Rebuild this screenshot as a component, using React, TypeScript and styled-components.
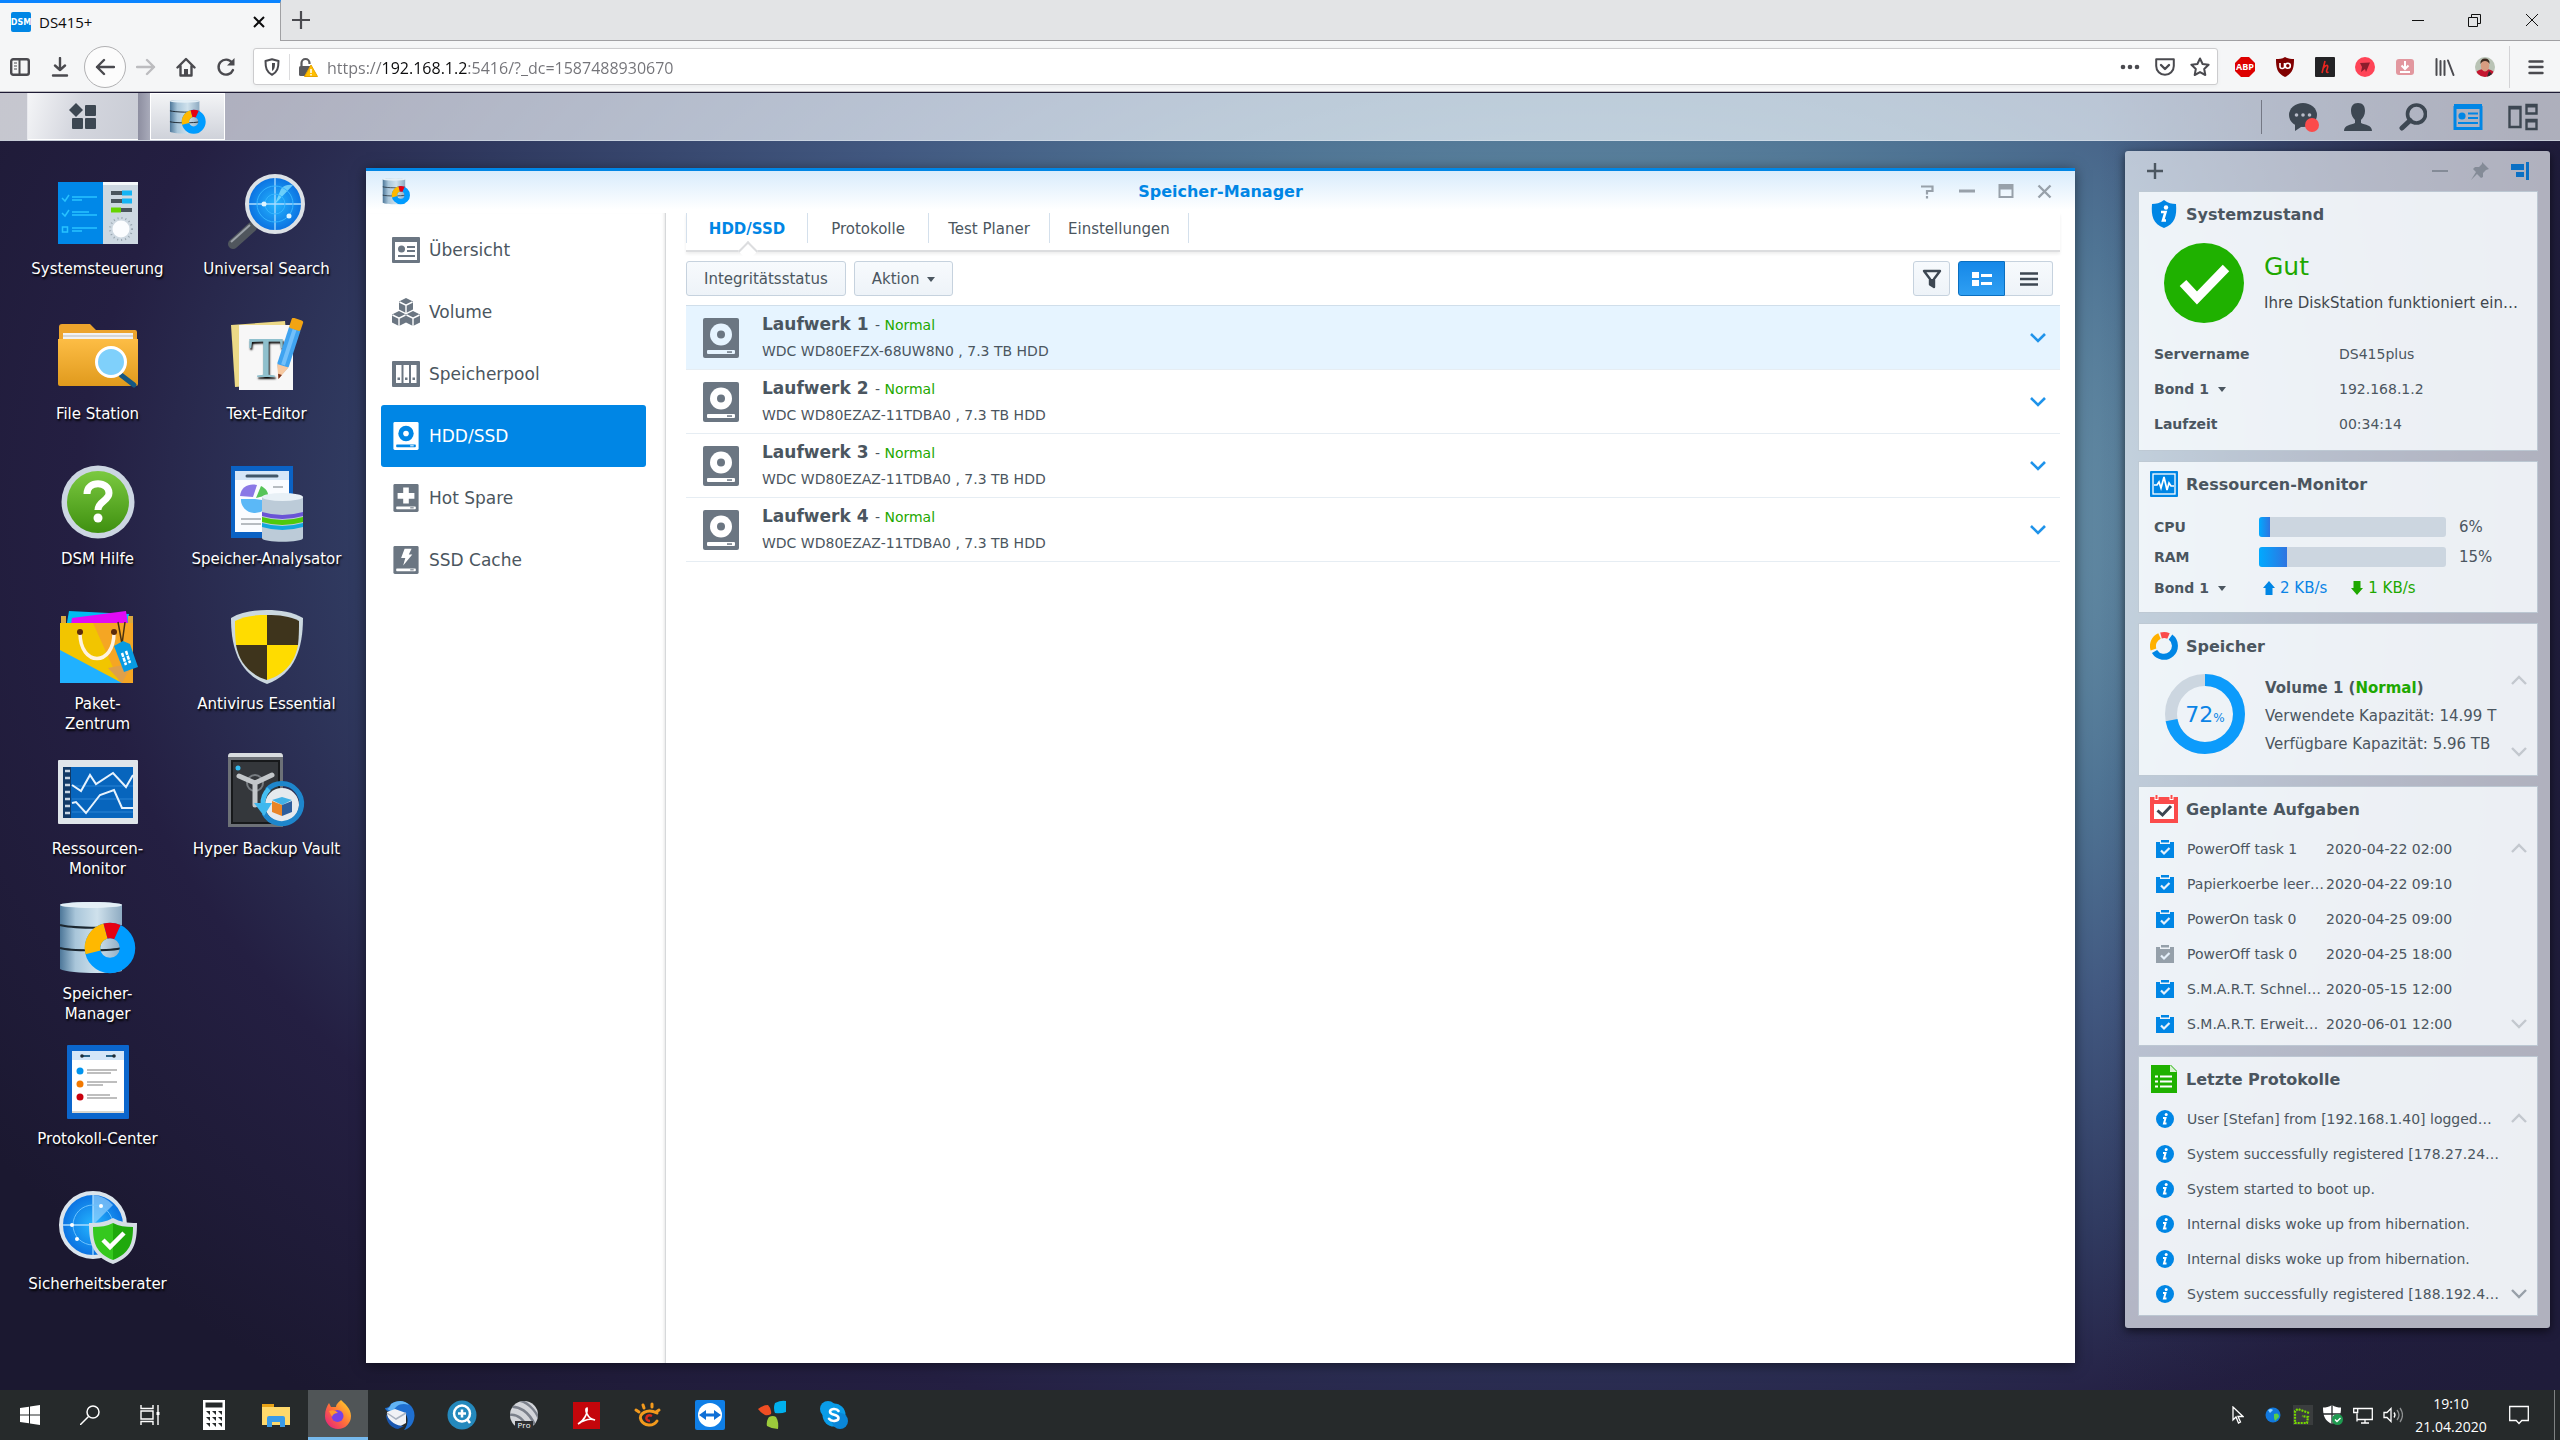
import React from "react";
import styled, { createGlobalStyle } from "styled-components";

const uiFont = `"DejaVu Sans", Verdana, sans-serif`;
const chromeFont = `"Open Sans", "Segoe UI", sans-serif`;

const GlobalStyle = createGlobalStyle`
  * { box-sizing: border-box; }
  body { margin: 0; font-family: ${uiFont}; font-size: 15px; color: #4b5660; }
  button, input, select { font: inherit; color: inherit; margin: 0; }
  button { border: 0; padding: 0; background: none; cursor: pointer; }
  h1, h2, h3, p, ul, dl, dd, dt { margin: 0; padding: 0; font-size: inherit; }
  ul { list-style: none; }
  svg { display: block; flex: none; }
`;

const Screen = styled.div`
  display: flex;
  flex-direction: column;
  min-height: 100vh;
  overflow: hidden;
  background:
    linear-gradient(to left, #1f1c3a 0, rgba(31, 28, 58, 0) 18%),
    radial-gradient(ellipse 59% 66% at 62% 36%, #7099a8 0, #668fa6 28%, #4f7494 44%, #425981 60%, #303a60 82%, #241f42 100%, #1b1830 125%);
`;

/* ---------- browser chrome ---------- */

const TabStrip = styled.div`
  display: flex;
  height: 41px;
  background: #e3e4e6;
  font-family: ${chromeFont};
  border-bottom: 1px solid #a0a0a3;
`;
const BrowserTab = styled.div`
  display: flex;
  align-items: center;
  gap: 8px;
  width: 281px;
  height: 41px;
  padding: 0 15px 0 11px;
  border-top: 3px solid #0a84ff;
  border-right: 1px solid #a0a0a3;
  background: #f5f6f7;
  font-size: 15px;
  color: #0c0c0d;
`;
const TabLabel = styled.span`
  flex: 1;
`;
const NewTab = styled.button`
  display: grid;
  place-items: center;
  width: 40px;
`;
const Caption = styled.div`
  display: flex;
  margin-left: auto;
`;
const CaptionButton = styled.button`
  display: grid;
  place-items: center;
  width: 57px;
  height: 40px;
`;
const Toolbar = styled.div`
  display: flex;
  align-items: center;
  height: 51px;
  padding-top: 1px;
  background: #f5f6f7;
  border-bottom: 1px solid #bcbcc0;
  font-family: ${chromeFont};
`;
const ToolButton = styled.button<{ $ring?: boolean }>`
  display: grid;
  place-items: center;
  width: ${(p) => (p.$ring ? 42 : 40)}px;
  height: 42px;
  margin-left: ${(p) => (p.$ring ? 4 : 0)}px;
  border: ${(p) => (p.$ring ? "1px solid #b1b1b3" : "0")};
  border-radius: 50%;
  background: ${(p) => (p.$ring ? "#fcfcfc" : "none")};
`;
const NavGroup = styled.div`
  display: flex;
  padding-right: 7px;
`;
const AddressBar = styled.div`
  flex: 1;
  display: flex;
  align-items: center;
  height: 37px;
  background: #fff;
  border: 1px solid #ccccce;
  border-radius: 3px;
  box-shadow: 0 1px 4px rgba(0, 0, 0, 0.05);
`;
const BarIcon = styled.button`
  display: grid;
  place-items: center;
  width: 35px;
  height: 30px;
`;
const AddressInput = styled.input`
  flex: 1;
  border: 0;
  outline: 0;
  padding: 2px 0 0 2px;
  height: 32px;
  font-size: 16px;
  color: #0c0c0d;
  background: linear-gradient(to right, #737378 57px, #0c0c0d 57px, #0c0c0d 143px, #737378 143px);
  background-clip: text;
  -webkit-background-clip: text;
  -webkit-text-fill-color: transparent;
`;
const Separator = styled.span<{ $h: number; $c: string }>`
  width: 1px;
  height: ${(p) => p.$h}px;
  background: ${(p) => p.$c};
`;
const Extensions = styled.div`
  display: flex;
  align-items: center;
  padding: 0 4px 0 7px;
  ${Separator} { margin: 0 6px 0 4px; }
`;

/* ---------- DSM task bar ---------- */

const Glass = styled.header`
  display: flex;
  height: 49px;
  border-top: 1px solid #1e1b35;
  background: linear-gradient(rgba(247, 251, 255, 0.66), rgba(247, 251, 255, 0.66));
  border-bottom: 1px solid rgba(220, 230, 240, 0.5);
`;
const Sliver = styled.span`
  width: 28px;
  background: rgba(255, 255, 255, 0.3);
  border-right: 1px solid #e8e9ee;
`;
const MenuButton = styled.button`
  display: grid;
  place-items: center;
  width: 110px;
  background: linear-gradient(105deg, #f4f5f7, #d4d6de 45%, #c9ccd5);
  border-bottom: 1px solid #fff;
`;
const BarGap = styled.span`
  width: 12px;
  background: linear-gradient(to right, #8d8ea0, #a9abba);
`;
const TaskButton = styled.button`
  display: grid;
  place-items: center;
  width: 75px;
  background: linear-gradient(#f3f4f6, #cfd2da);
  border: 1px solid #fff;
`;
const Tray = styled.div`
  display: flex;
  align-items: center;
  margin-left: auto;
  padding-right: 10px;
  ${Separator} { margin-right: 13px; }
`;
const TrayButton = styled.button`
  display: grid;
  place-items: center;
  width: 55px;
  height: 46px;
`;

/* ---------- desktop ---------- */

const Desktop = styled.main`
  flex: 1;
  display: flex;
  align-items: stretch;
  padding: 0 10px 0 0;
`;
const IconGrid = styled.ul`
  display: grid;
  grid-auto-flow: column;
  grid-template-rows: repeat(8, 145px);
  grid-auto-columns: 169px;
  align-content: start;
  width: 366px;
  padding: 32px 0 0 13px;
`;
const Shortcut = styled.button`
  display: flex;
  flex-direction: column;
  align-items: center;
  gap: 6px;
  width: 100%;
  line-height: 20px;
  color: #fff;
  text-shadow: 1px 2px 2px #000;
`;
const ShortcutLabel = styled.span<{ $narrow?: boolean }>`
  max-width: ${(p) => (p.$narrow ? 105 : 169)}px;
`;

/* ---------- application window ---------- */

const AppWindow = styled.section`
  flex: 1;
  display: flex;
  flex-direction: column;
  margin: 27px 50px 27px 0;
  background: #fff;
  border-top: 3px solid #0086e5;
  box-shadow: 0 2px 12px rgba(0, 0, 0, 0.5);
`;
const TitleBar = styled.header`
  display: grid;
  grid-template-columns: 1fr auto 1fr;
  align-items: center;
  height: 42px;
  padding: 0 11px 2px;
  background: linear-gradient(#d8ecfc, #fff 92%);
`;
const TitleIcon = styled.span`
  padding-left: 5px;
`;
const WindowTitle = styled.h1`
  font-size: 16px;
  color: #0086e5;
`;
const WindowButtons = styled.div`
  display: flex;
  justify-content: flex-end;
`;
const WindowButton = styled.button`
  display: grid;
  place-items: center;
  width: 39px;
  height: 30px;
`;
const WindowBody = styled.div`
  flex: 1;
  display: flex;
`;
const Sidebar = styled.nav`
  width: 300px;
  padding: 6px 19px 0 15px;
  border-right: 1px solid #d6d8da;
  box-shadow: inset -3px 0 3px -2px rgba(0, 0, 0, 0.1);
`;
const NavItem = styled.a<{ $active?: boolean }>`
  display: flex;
  align-items: center;
  gap: 9px;
  height: 62px;
  padding-left: 11px;
  border-radius: 3px;
  font-size: 17px;
  text-decoration: none;
  color: ${(p) => (p.$active ? "#fff" : "#4b5660")};
  background: ${(p) => (p.$active ? "#0086e5" : "none")};
`;
const Pane = styled.div`
  flex: 1;
  padding: 0 15px 0 20px;
`;
const Tabs = styled.div`
  display: flex;
  height: 39px;
  padding-bottom: 7px;
  border-bottom: 2px solid #dcdddf;
  box-shadow: 0 2px 3px rgba(0, 0, 0, 0.07);
`;
const Tab = styled.button<{ $active?: boolean }>`
  position: relative;
  min-width: 121px;
  padding: 2px 18px 0;
  border-right: 1px solid #d4e0ec;
  font-weight: ${(p) => (p.$active ? 700 : 400)};
  color: ${(p) => (p.$active ? "#0086e5" : "#4b5660")};
  &:first-child { min-width: 122px; border-left: 1px solid #d4e0ec; }
  ${(p) =>
    p.$active &&
    `&::after {
      content: "";
      position: absolute;
      left: 50%;
      bottom: -15px;
      width: 12px;
      height: 12px;
      margin-left: -6px;
      background: #fff;
      border: 2px solid #dcdddf;
      border-right: 0;
      border-bottom: 0;
      transform: rotate(45deg);
    }`}
`;
const Actions = styled.div`
  display: flex;
  gap: 8px;
  padding: 9px 7px 9px 0;
`;
const Action = styled.button<{ $w?: number; $on?: boolean; $side?: "left" | "right" }>`
  display: flex;
  align-items: center;
  justify-content: center;
  gap: 8px;
  height: 35px;
  width: ${(p) => (p.$w ? `${p.$w}px` : "auto")};
  padding: ${(p) => (p.$w ? "0" : "1px 17px 0")};
  border: 1px solid ${(p) => (p.$on ? "#0a6fc0" : "#c6d2de")};
  border-radius: ${(p) => (p.$side === "left" ? "3px 0 0 3px" : p.$side === "right" ? "0 3px 3px 0" : "3px")};
  ${(p) => p.$side === "right" && "border-left: 0;"}
  background: ${(p) => (p.$on ? "linear-gradient(#1688e8, #2f9ff2)" : "linear-gradient(#f7fafd, #eef3f8)")};
`;
const Spacer = styled.span`
  flex: 1;
`;
const Segmented = styled.div`
  display: flex;
`;
const DriveList = styled.ul`
  border-top: 1px solid #d0deea;
`;
const Drive = styled.li<{ $active?: boolean }>`
  display: flex;
  align-items: center;
  gap: 23px;
  height: 64px;
  padding: 0 10px 0 17px;
  border-bottom: 1px solid #e6edf3;
  background: ${(p) => (p.$active ? "#e6f4ff" : "none")};
`;
const DriveText = styled.div`
  flex: 1;
  font-size: 14px;
  line-height: 26px;
`;
const DriveName = styled.strong`
  font-size: 17px;
`;
const DriveState = styled.span`
  padding-left: 2px;
  font-weight: 400;
`;
const Ok = styled.span`
  color: #1ea800;
`;
const Expand = styled.button`
  display: grid;
  place-items: center;
  width: 24px;
  height: 24px;
`;

/* ---------- widgets ---------- */

const Widgets = styled.aside`
  align-self: flex-start;
  width: 425px;
  margin-top: 10px;
  padding: 0 12px 12px 13px;
  border-radius: 3px;
  background: rgba(247, 251, 255, 0.67);
  box-shadow: 0 3px 10px rgba(0, 0, 0, 0.6);
`;
const WidgetBar = styled.div`
  display: flex;
  align-items: center;
  height: 40px;
  margin: 0 -2px 0 -3px;
`;
const WidgetButton = styled.button`
  display: grid;
  place-items: center;
  width: 40px;
  height: 40px;
`;
const CardStack = styled.div`
  display: flex;
  flex-direction: column;
  gap: 10px;
`;
const Card = styled.section`
  border: 1px solid rgba(150, 166, 182, 0.55);
  background: rgba(249, 252, 255, 0.82);
  font-size: 14px;
`;
const CardTitle = styled.h2`
  display: flex;
  align-items: center;
  gap: 8px;
  height: 44px;
  padding-left: 11px;
  font-size: 16px;
`;
const Health = styled.div`
  display: flex;
  align-items: center;
  gap: 20px;
  padding: 7px 0 13px 25px;
  line-height: 36px;
`;
const HealthState = styled.p`
  padding-top: 4px;
  font-size: 25px;
  color: #1ea800;
`;
const HealthNote = styled.p`
  font-size: 15px;
  color: #41474d;
  white-space: nowrap;
`;
const Facts = styled.dl`
  display: grid;
  grid-template-columns: 185px 1fr;
  padding: 1px 0 8px 15px;
  line-height: 35px;
`;
const Term = styled.dt`
  font-weight: 700;
`;
const PickerWrap = styled.span`
  display: inline-flex;
  align-items: center;
  gap: 9px;
`;
const Picker = styled.select`
  appearance: none;
  border: 0;
  padding: 0;
  background: none;
  font-weight: 700;
`;
const Meters = styled.div`
  display: grid;
  grid-template-columns: 105px 187px 1fr;
  grid-template-rows: 30px 30px 32px;
  align-items: center;
  padding: 6px 0 8px 15px;
  font-size: 15px;
`;
const MeterName = styled.span`
  font-size: 14px;
  font-weight: 700;
`;
const Track = styled.div`
  height: 20px;
  border-radius: 3px;
  background: #ccd6e0;
  overflow: hidden;
`;
const Fill = styled.div`
  height: 100%;
  background: linear-gradient(to right, #00aaff, #2f74e0);
`;
const MeterValue = styled.span`
  padding-left: 13px;
`;
const Traffic = styled.div`
  grid-column: 2 / 4;
  display: flex;
  gap: 24px;
  padding-left: 4px;
`;
const Rate = styled.span<{ $c: string }>`
  display: flex;
  align-items: center;
  gap: 5px;
  color: ${(p) => p.$c};
`;
const Scrollable = styled.div<{ $pad: string }>`
  display: flex;
  padding: ${(p) => p.$pad};
`;
const Scroller = styled.div<{ $inset?: boolean }>`
  display: flex;
  flex-direction: column;
  justify-content: space-between;
  margin-left: auto;
  padding: ${(p) => (p.$inset ? 11 : 0)}px 0;
`;
const ScrollButton = styled.button`
  display: grid;
  place-items: center;
  width: 24px;
  height: 12px;
`;
const Ring = styled.div`
  display: grid;
  width: 80px;
  height: 80px;
  margin-right: 20px;
  > * { grid-area: 1 / 1; }
`;
const RingValue = styled.span`
  place-self: center;
  font-size: 22px;
  color: #0b84e6;
`;
const Percent = styled.small`
  font-size: 12px;
`;
const VolumeText = styled.div`
  font-size: 15px;
  line-height: 28px;
  white-space: nowrap;
`;
const TaskTable = styled.table`
  border-collapse: collapse;
  td { height: 35px; padding: 0; white-space: nowrap; }
  td:nth-child(1) { width: 31px; }
  td:nth-child(2) { width: 139px; }
`;
const LogItem = styled.li`
  display: flex;
  align-items: center;
  gap: 13px;
  height: 35px;
  white-space: nowrap;
`;

/* ---------- Windows task bar ---------- */

const WinBar = styled.footer`
  display: flex;
  height: 50px;
  background: #262a2b;
  color: #fff;
  font-family: ${chromeFont};
`;
const WinButton = styled.button<{ $on?: boolean }>`
  display: grid;
  place-items: center;
  width: 60px;
  height: 50px;
  background: ${(p) => (p.$on ? "#505557" : "none")};
  border-bottom: 3px solid ${(p) => (p.$on ? "#76b9ed" : "transparent")};
  padding-top: 3px;
`;
const Launchers = styled.div`
  display: flex;
  gap: 2px;
  padding-left: 4px;
`;
const WinTray = styled.div`
  display: flex;
  align-items: center;
  margin-left: auto;
`;
const WinTrayButton = styled.button<{ $w?: number }>`
  display: grid;
  place-items: center;
  width: ${(p) => p.$w ?? 30}px;
  height: 48px;
`;
const Clock = styled.time`
  width: 86px;
  font-size: 14px;
  line-height: 23px;
  text-align: center;
`;
const PeekEdge = styled.span`
  width: 6px;
  height: 50px;
  border-left: 1px solid #7f8283;
`;

/* ---------- small drawings ---------- */

const Svg = ({ s = 24, h, vb, children }: { s?: number; h?: number; vb?: string; children: React.ReactNode }) => (
  <svg width={s} height={h ?? s} viewBox={vb ?? `0 0 ${s} ${h ?? s}`} fill="none" aria-hidden="true">
    {children}
  </svg>
);

const line = { stroke: "#4a4a4f", strokeWidth: 2.4, strokeLinecap: "round" as const, strokeLinejoin: "round" as const };

const Caret = () => (
  <Svg s={8} h={5}><path d="M0 0h8L4 5z" fill="#4b5660" /></Svg>
);
const Chevron = ({ up, c = "#c3c8ce", w = 2.4 }: { up?: boolean; c?: string; w?: number }) => (
  <Svg s={16} h={10}><path d={up ? "M1 9l7-7 7 7" : "M1 1l7 7 7-7"} stroke={c} strokeWidth={w} /></Svg>
);

const StorageArt = ({ size }: { size: number }) => (
  <Svg s={size} vb="0 -3 80 80">
    <defs>
      <linearGradient id="cyl"><stop offset="0" stopColor="#4d7799" /><stop offset=".25" stopColor="#a9c6da" /><stop offset=".6" stopColor="#cfe1ec" /><stop offset="1" stopColor="#8eabc2" /></linearGradient>
    </defs>
    <path d="M2 4C2 2 18 1 33 1s31 1 31 3v66c-8 3-54 3-62-2z" fill="url(#cyl)" />
    <ellipse cx="33" cy="4" rx="31" ry="3" fill="#e4eff6" />
    <path d="M2 24c10 3 52 4 62 1M2 47c10 3 52 3 62 0" stroke="#1c2730" strokeWidth="2" />
    <circle cx="52" cy="47" r="17.500" stroke="#009cff" strokeWidth="15.500" />
    <path d="M35 51.400A17.500 17.500 0 0 1 47.500 30.100" stroke="#ffb800" strokeWidth="15.500" />
    <path d="M47.500 30.100A17.500 17.500 0 0 1 59.400 31.100" stroke="#e60012" strokeWidth="15.500" />
  </Svg>
);

const DriveArt = ({ w, h, fg, bg, kind = "disk" }: { w: number; h: number; fg: string; bg: string; kind?: "disk" | "plus" | "bolt" }) => (
  <Svg s={w} h={h} vb="0 0 36 40">
    <rect width="36" height="40" rx="2" fill={fg} />
    {kind === "disk" && (<><circle cx="18" cy="16.500" r="11" fill={bg} /><circle cx="18" cy="16.500" r="4" fill={fg} /></>)}
    {kind === "plus" && <path d="M14 5h8v8h8v8h-8v7h-8v-7H6v-8h8z" fill={bg} />}
    {kind === "bolt" && <path d="M16 4h10l-4 8h5L14 28l3-11h-6z" fill={bg} />}
    <rect x="4" y="32" width="28" height="4" rx="1" fill={bg} />
    <rect x="24" y="33.300" width="5" height="1.500" fill={fg} />
  </Svg>
);

const grey = "#6b7682";
const SideIcon = ({ kind, on }: { kind: string; on?: boolean }) => {
  const fg = on ? "#fff" : grey;
  const bg = on ? "#0086e5" : "#fff";
  if (kind === "overview")
    return (
      <Svg s={28} h={26}>
        <rect width="28" height="26" rx="1" fill={fg} /><rect x="3" y="5" width="22" height="18" fill={bg} />
        <circle cx="9.500" cy="12" r="3.500" fill={fg} />
        <path d="M15 10h8M15 14h8M6 19h17" stroke={fg} strokeWidth="2" />
      </Svg>
    );
  if (kind === "volume")
    return (
      <Svg s={28} h={28}>
        {[[14, 0], [7, 13], [21, 13]].map(([x, y]) => (
          <g key={x} transform={`translate(${x} ${y})`}>
            <path d="M0 0l7 3.500v8L0 15l-7-3.500v-8z" fill={fg} />
            <path d="M-6.500 4L0 7.200 6.500 4M0 7.200V15" stroke={bg} strokeWidth="1.400" />
          </g>
        ))}
      </Svg>
    );
  if (kind === "pool")
    return (
      <Svg s={28} h={26}>
        <rect width="28" height="26" rx="1" fill={fg} />
        {[4, 11.5, 19].map((x) => (<g key={x}><rect x={x} y="4" width="5.500" height="18" fill={bg} /><rect x={x + 1.5} y="16.500" width="2.500" height="2.500" fill={fg} /></g>))}
      </Svg>
    );
  const k = kind === "hdd" ? "disk" : kind === "spare" ? "plus" : "bolt";
  return <Svg s={28}><g transform="translate(1 0)"><DriveArt w={26} h={28} fg={fg} bg={bg} kind={k} /></g></Svg>;
};

const Art: Record<string, React.ReactNode> = {
  control: (
    <>
      <rect y="9" width="46" height="62" fill="#0088e8" /><rect x="45" y="9" width="35" height="62" fill="#cdd8e1" />
      <rect x="45" y="9" width="35" height="3" fill="#f4f8fa" />
      <path d="M4 25l3 3 4-6M4 40l3 3 4-6M4.500 54h5v5h-5zM14 24h25M14 27h10M14 39h17M14 42h25M14 55h25M14 58h10" stroke="#27c2ff" strokeWidth="1.500" />
      <path d="M53 20h21M53 28h21M53 37h21" stroke="#4a555d" strokeWidth="4" />
      <path d="M64 20h10M64 28h10" stroke="#14b4f5" strokeWidth="5" /><path d="M53 37h10" stroke="#66d400" strokeWidth="5" />
      <circle cx="63" cy="56" r="11" stroke="#96a3ad" strokeWidth="2" strokeDasharray="1 3" /><circle cx="63" cy="56" r="8.500" fill="#fbfdff" />
    </>
  ),
  search: (
    <>
      <path d="M6 71L25 54" stroke="#50565d" strokeWidth="10" strokeLinecap="round" /><path d="M4 69L23 52" stroke="#9ba1a8" strokeWidth="2" />
      <circle cx="48" cy="31" r="28" fill="url(#radar)" stroke="#dce1e6" strokeWidth="4" />
      <path d="M48 5v52M22 31h52" stroke="#a9dcff" strokeWidth="1.300" /><path d="M48 31L66 12Q58 11 54 16z" fill="#8fe8ff" opacity=".7" />
      <circle cx="48" cy="31" r="10" stroke="#35b5ff" /><circle cx="48" cy="31" r="18" stroke="#35b5ff" />
      <circle cx="37" cy="31" r="2.500" fill="#dff5ff" /><circle cx="62" cy="43" r="2.500" fill="#dff5ff" />
    </>
  ),
  folder: (
    <>
      <path d="M1 9q0-3 3-3h28l6 6h39q2 0 2 2v20H1z" fill="#eda42c" /><path d="M5 15h70v8H5z" fill="#f2f2f2" /><path d="M5 18h70" stroke="#b9b9b9" />
      <path d="M0 21h80v45q0 2-2 2H2q-2 0-2-2z" fill="url(#gold)" />
      <path d="M63 57l13 10" stroke="#165782" strokeWidth="5" strokeLinecap="round" /><circle cx="53" cy="44" r="14.500" fill="#7fd0fb" stroke="#fff" strokeWidth="3" />
    </>
  ),
  text: (
    <>
      <path d="M4 7l54-4 6 62-56 4z" fill="#ecd987" /><path d="M12 7h54v65H12z" fill="#f7f7f7" />
      <text x="39" y="59" fontFamily="Liberation Serif, serif" fontSize="58" textAnchor="middle" fill="#8fc0cd">T</text>
      <g transform="translate(70 4) rotate(18)"><path d="M-6 7h12v38l-6 14-6-14z" fill="#3fa3f0" /><path d="M-2 8h4v37h-4z" fill="#73c0fa" /><path d="M-6 46h12l-6 14z" fill="#f7c8a0" /><path d="M-2 55h4l-2 5z" fill="#7a2f18" /><rect x="-6" y="-3" width="12" height="11" rx="2" fill="#f2a413" /></g>
    </>
  ),
  help: (
    <>
      <circle cx="40" cy="39" r="36.500" fill="#ccd6e2" /><circle cx="40" cy="39" r="31" fill="url(#green)" />
      <path d="M29 31c0-14 22-13 22-1 0 8-11 8-11 17" stroke="#fff" strokeWidth="7" /><circle cx="40" cy="55" r="4.500" fill="#fff" />
    </>
  ),
  analyzer: (
    <>
      <path d="M4 3h62v72H4z" fill="#0b62c4" /><path d="M8 8h54v61H8z" fill="#fafcff" /><path d="M8 8h54v9H8z" fill="#d5e6f8" /><path d="M20 13h30" stroke="#40566a" strokeWidth="3" strokeLinecap="round" />
      <path d="M28 36L14 36A14 13 0 0 0 42 38z" fill="#5bb8f7" /><path d="M26 34L13 33c1-10 10-13 17-11z" fill="#8a78e6" /><path d="M29 35l5-12c4 2 7 5 7 9z" fill="#57c458" />
      <path d="M46 24h10M14 56h20M14 61h20" stroke="#b7bcc1" strokeWidth="2" />
      <path d="M35 34v41c0 5 41 5 41 0V34z" fill="#bccbd8" /><path d="M35 49q20 6 41 0v4q-21 6-41 0z" fill="#6a54d6" /><path d="M35 54q20 6 41 0v5q-21 6-41 0z" fill="#4fc90c" /><path d="M35 60q20 6 41 0v4q-21 6-41 0z" fill="#13a7dd" /><ellipse cx="55.500" cy="34" rx="20.500" ry="4" fill="#e8f0f6" />
    </>
  ),
  packages: (
    <>
      <path d="M11 3l60 3-2 20H7z" fill="#00bdf2" /><path d="M14 10l54-7 3 20H12z" fill="#e20af5" /><path d="M3 8h5v12H3zM70 8h5v12h-5z" fill="#d9a840" />
      <path d="M2 15h73v60H2z" fill="#f2c500" /><path d="M35 15h40v60H62z" fill="#f5a623" /><path d="M2 42l62 33H2z" fill="#20b1ff" /><path d="M50 60l14 15 11-20z" fill="#dfa04a" />
      <path d="M22 25c0 34 34 34 34 0" stroke="#fff3e0" strokeWidth="3.500" /><circle cx="22" cy="24" r="3" fill="#5c2b0a" /><circle cx="56" cy="24" r="3" fill="#5c2b0a" />
      <path d="M60 14l4 22M67 14l-3 22" stroke="#4a3210" strokeWidth="1.500" /><path d="M56 38l9-5 7 3 8 23-14 5z" fill="#079be3" /><path d="M64 45l4 12M68 43l4 12" stroke="#fff" strokeWidth="2.500" strokeDasharray="4 1" />
    </>
  ),
  antivirus: (
    <>
      <path d="M40 2c13 0 26 2 36 8 0 30-8 56-36 66C12 66 4 40 4 10 14 4 27 2 40 2z" fill="#cbd8df" />
      <path d="M40 7v30H9C8 28 8 20 8 13c9-5 20-6 32-6z" fill="#ffdc00" /><path d="M40 7v30h31c1-9 1-17 1-24-9-5-20-6-32-6z" fill="#3e341c" /><path d="M40 37H9c3 16 12 29 31 35z" fill="#3e341c" /><path d="M40 37h31c-3 16-12 29-31 35z" fill="#ffdc00" />
    </>
  ),
  monitor: (
    <>
      <rect y="7" width="80" height="64" rx="1" fill="#dfe5ea" /><rect x="5" y="14" width="70" height="51" fill="#0765bd" /><rect x="5" y="14" width="8" height="51" fill="#123a66" />
      <path d="M7 18h5M7 25h5M7 32h5M7 39h5M7 46h5M7 53h5M7 60h5" stroke="#c8d7e5" strokeWidth="2.500" /><path d="M14 33h61M14 46h61M14 59h61" stroke="#2a84d4" />
      <path d="M14 32l9 6 9-16 6 9 17-11 13 14 7-12M14 50l4-1 10 11 14-18 14-5 8 18h11" stroke="#e7f3fd" strokeWidth="2" />
    </>
  ),
  vault: (
    <>
      <path d="M1 3q0-3 3-3h49q3 0 3 3v71H1z" fill="#6d7177" /><path d="M1 4q0-4 3-4h49q3 0 3 4z" fill="#d9dde0" /><path d="M5 8h47v62H5z" fill="#34373b" stroke="#17191b" strokeWidth="2" />
      <circle cx="11" cy="15" r="2.500" fill="#35bdf3" /><circle cx="28" cy="30" r="8" stroke="#777c81" strokeWidth="2" />
      <path d="M28 30L12 23M28 30l17-8M28 30v22" stroke="#c3c7ca" strokeWidth="5" strokeLinecap="round" />
      <circle cx="55" cy="52" r="17" fill="#e5eaee" /><path d="M37 60A20 20 0 1 0 40 37" stroke="#1e86cc" strokeWidth="5" /><path d="M42 36A20 20 0 0 0 36 52" stroke="#45bff2" strokeWidth="5" /><path d="M27 50h18l-8 13z" fill="#3fb8ee" />
      <path d="M55 44l10 3-10 5-10-5z" fill="#41b1e6" /><path d="M45 48l10 4v11l-10-4z" fill="#e98527" /><path d="M65 48l-10 4v11l10-4z" fill="#2d5e9c" />
    </>
  ),
  logs: (
    <>
      <rect x="9" y="2" width="62" height="74" rx="1" fill="#0b66cc" /><rect x="14" y="8" width="52" height="62" fill="#fff" /><rect x="14" y="8" width="52" height="9" fill="#d4e6f8" />
      <path d="M24 13h8M48 13h8" stroke="#2a6388" strokeWidth="2" /><circle cx="24" cy="13" r="1.800" fill="#1f2c36" /><circle cx="56" cy="13" r="1.800" fill="#1f2c36" />
      <circle cx="22" cy="28" r="3.500" fill="#0094ee" /><circle cx="22" cy="41" r="3.500" fill="#f27900" /><circle cx="22" cy="54" r="3.500" fill="#c9000d" />
      <path d="M29 27h30M29 30h24M29 39h30M29 42h16M29 52h23M29 55h30" stroke="#a9a9a9" strokeWidth="1.500" /><path d="M14 69h52" stroke="#b5b09f" />
    </>
  ),
  advisor: (
    <>
      <circle cx="35" cy="37" r="32" fill="url(#radar)" stroke="#dbe4ec" strokeWidth="4" /><path d="M35 7v60M5 37h60" stroke="#a9dcff" strokeWidth="1.300" /><path d="M35 37l20-20A30 30 0 0 0 35 7z" fill="#a9dcff" opacity=".6" />
      <circle cx="35" cy="37" r="20" stroke="#6cc2ff" /><circle cx="14" cy="37" r="2" fill="#fff" /><circle cx="43" cy="18" r="2" fill="#fff" /><circle cx="19" cy="51" r="2" fill="#fff" />
      <path d="M55 30c7 4 14 5 24 5 0 20-3 33-24 41-21-8-24-21-24-41 10 0 17-1 24-5z" fill="#d6dee5" /><path d="M55 35c6 3 12 4 20 4 0 16-3 26-20 33z" fill="#1fa90c" /><path d="M55 35c-6 3-12 4-20 4 0 16 3 26 20 33z" fill="#35c81e" />
      <path d="M45 52l7 7 14-14" stroke="#fff" strokeWidth="4.500" />
    </>
  ),
};

const HiddenSvg = styled.svg`
  position: absolute;
`;
const Gradients = () => (
  <HiddenSvg width="0" height="0" aria-hidden="true">
    <defs>
      <radialGradient id="radar"><stop offset="0" stopColor="#25b6ff" /><stop offset="1" stopColor="#0a6fe0" /></radialGradient>
      <linearGradient id="gold" x2="0" y2="1"><stop stopColor="#fdbd45" /><stop offset="1" stopColor="#e09a1d" /></linearGradient>
      <linearGradient id="green" x2="0" y2="1"><stop stopColor="#7bc940" /><stop offset="1" stopColor="#3f9010" /></linearGradient>
    </defs>
  </HiddenSvg>
);

/* ---------- data ---------- */

const shortcuts: { art: string; label: string; narrow?: boolean }[] = [
  { art: "control", label: "Systemsteuerung" },
  { art: "folder", label: "File Station" },
  { art: "help", label: "DSM Hilfe" },
  { art: "packages", label: "Paket-Zentrum", narrow: true },
  { art: "monitor", label: "Ressourcen-Monitor", narrow: true },
  { art: "storage", label: "Speicher-Manager", narrow: true },
  { art: "logs", label: "Protokoll-Center" },
  { art: "advisor", label: "Sicherheitsberater" },
  { art: "search", label: "Universal Search" },
  { art: "text", label: "Text-Editor" },
  { art: "analyzer", label: "Speicher-Analysator" },
  { art: "antivirus", label: "Antivirus Essential" },
  { art: "vault", label: "Hyper Backup Vault" },
];
const sections = [
  ["overview", "Übersicht"],
  ["volume", "Volume"],
  ["pool", "Speicherpool"],
  ["hdd", "HDD/SSD"],
  ["spare", "Hot Spare"],
  ["cache", "SSD Cache"],
];
const drives = [
  ["Laufwerk 1", "WDC WD80EFZX-68UW8N0 , 7.3 TB HDD"],
  ["Laufwerk 2", "WDC WD80EZAZ-11TDBA0 , 7.3 TB HDD"],
  ["Laufwerk 3", "WDC WD80EZAZ-11TDBA0 , 7.3 TB HDD"],
  ["Laufwerk 4", "WDC WD80EZAZ-11TDBA0 , 7.3 TB HDD"],
];
const tasks: [string, string, boolean][] = [
  ["PowerOff task 1", "2020-04-22 02:00", true],
  ["Papierkoerbe leer…", "2020-04-22 09:10", true],
  ["PowerOn task 0", "2020-04-25 09:00", true],
  ["PowerOff task 0", "2020-04-25 18:00", false],
  ["S.M.A.R.T. Schnel…", "2020-05-15 12:00", true],
  ["S.M.A.R.T. Erweit…", "2020-06-01 12:00", true],
];
const logs = [
  "User [Stefan] from [192.168.1.40] logged…",
  "System successfully registered [178.27.24…",
  "System started to boot up.",
  "Internal disks woke up from hibernation.",
  "Internal disks woke up from hibernation.",
  "System successfully registered [188.192.4…",
];

/* ---------- parts ---------- */

const Browser = () => (
  <>
    <TabStrip>
      <BrowserTab>
        <Svg s={20}><rect width="20" height="20" rx="2" fill="#0086e5" /><text x="10" y="13" fontSize="8" fontWeight="700" fontFamily="DejaVu Sans, sans-serif" textAnchor="middle" fill="#fff">DSM</text></Svg>
        <TabLabel>DS415+</TabLabel>
        <button aria-label="Tab schließen"><Svg s={12}><path d="M1 1l10 10M11 1L1 11" stroke="#0c0c0d" strokeWidth="2" /></Svg></button>
      </BrowserTab>
      <NewTab aria-label="Neuer Tab"><Svg s={18}><path d="M9 0v18M0 9h18" stroke="#4a4a4f" strokeWidth="2.200" /></Svg></NewTab>
      <Caption>
        <CaptionButton aria-label="Minimieren"><Svg s={12}><path d="M0 6.500h12" stroke="#111" /></Svg></CaptionButton>
        <CaptionButton aria-label="Wiederherstellen"><Svg s={13}><path d="M.5 3.500h9v9h-9zM3.500 3V.5h9v9H10" stroke="#111" /></Svg></CaptionButton>
        <CaptionButton aria-label="Schließen"><Svg s={14}><path d="M1 1l12 12M13 1L1 13" stroke="#111" /></Svg></CaptionButton>
      </Caption>
    </TabStrip>
    <Toolbar>
      <NavGroup>
        <ToolButton aria-label="Seitenleiste"><Svg s={20} h={18}><rect x="1.200" y="1.200" width="17.600" height="15.600" rx="2" {...line} /><path d="M9.500 1v16" {...line} strokeWidth={2} /><path d="M4 5h3M4 8h3M4 11h3" stroke="#4a4a4f" /></Svg></ToolButton>
        <ToolButton aria-label="Downloads"><Svg s={18} h={20}><path d="M9 1v12M4 8.500L9 13l5-4.500M2 18.500h14" {...line} /></Svg></ToolButton>
        <ToolButton $ring aria-label="Zurück"><Svg s={20} h={18}><path d="M19 9H2M9 2L2 9l7 7" {...line} /></Svg></ToolButton>
        <ToolButton aria-label="Vor"><Svg s={20} h={18}><path d="M1 9h17M11 2l7 7-7 7" {...line} stroke="#bcbcbf" /></Svg></ToolButton>
        <ToolButton aria-label="Startseite"><Svg s={20}><path d="M1.500 10.500L10 2l8.500 8.500M4.500 9v9.500h11V9" {...line} /><path d="M8 19v-7h4v7z" fill="#4a4a4f" /></Svg></ToolButton>
        <ToolButton aria-label="Neu laden"><Svg s={20}><path d="M16 5.500A7.500 7.500 0 1 0 17 13" {...line} /><path d="M18.500 1v7.500H11z" fill="#4a4a4f" /></Svg></ToolButton>
      </NavGroup>
      <AddressBar>
        <BarIcon aria-label="Schutz"><Svg s={16} h={18}><path d="M1.500 3L8 1.200 14.500 3c0 7-1 11-6.500 13.800C2.500 14 1.500 10 1.500 3z" {...line} strokeWidth={2} /><path d="M8 5v8c2-1 3-3 3-8z" fill="#4a4a4f" /></Svg></BarIcon>
        <Separator $h={26} $c="#dcdcde" />
        <BarIcon aria-label="Verbindung nicht sicher"><Svg s={20}><rect x="1" y="9" width="12" height="10" rx="1.500" fill="#5a5a5e" /><path d="M3.500 9V6a4 4 0 0 1 8 0v1" stroke="#5a5a5e" strokeWidth="2.200" /><path d="M13 8l6.500 11.500h-13z" fill="#ffbf00" stroke="#e8a300" /><path d="M13 12v4M13 17v1.500" stroke="#fff" strokeWidth="1.500" /></Svg></BarIcon>
        <AddressInput aria-label="Adresse" defaultValue="https://192.168.1.2:5416/?_dc=1587488930670" />
        <BarIcon aria-label="Seitenaktionen"><Svg s={20} h={6}><circle cx="3" cy="3" r="2.300" fill="#4a4a4f" /><circle cx="10" cy="3" r="2.300" fill="#4a4a4f" /><circle cx="17" cy="3" r="2.300" fill="#4a4a4f" /></Svg></BarIcon>
        <BarIcon aria-label="Pocket"><Svg s={20} h={18}><path d="M1.200 1.200h17.600V8a8.800 8.800 0 0 1-17.600 0z" {...line} strokeWidth={2} /><path d="M6 7l4 4 4-4" {...line} /></Svg></BarIcon>
        <BarIcon aria-label="Lesezeichen"><Svg s={20}><path d="M10 1.500l2.600 5.500 6 .8-4.400 4.200 1.100 6L10 15.100 4.700 18l1.100-6L1.400 7.800l6-.8z" {...line} strokeWidth={2} /></Svg></BarIcon>
      </AddressBar>
      <Extensions>
        <ToolButton aria-label="Adblock Plus"><Svg s={20}><path d="M6 0h8l6 6v8l-6 6H6l-6-6V6z" fill="#d00" /><text x="10" y="13" fontSize="9" fontWeight="700" fontFamily="Open Sans, sans-serif" textAnchor="middle" fill="#fff">ABP</text></Svg></ToolButton>
        <ToolButton aria-label="uBlock Origin"><Svg s={18} h={20}><path d="M9 0c3 2 6 2 9 2 0 9-1 14-9 18C1 16 0 11 0 2c3 0 6 0 9-2z" fill="#800000" /><path d="M4 6v3.500q0 2 2.200 2T8.500 9.500V6" stroke="#fff" strokeWidth="1.600" /><circle cx="11.800" cy="8.800" r="2.500" stroke="#fff" strokeWidth="1.600" /></Svg></ToolButton>
        <ToolButton aria-label="Erweiterung h"><Svg s={20}><rect width="20" height="20" rx="1" fill="#232326" /><path d="M10 4L7 16M8.500 11c3-4 5-3 4 0l-1 3q0 2 2 1" stroke="#e8251f" strokeWidth="1.600" /></Svg></ToolButton>
        <ToolButton aria-label="Erweiterung"><Svg s={20}><circle cx="10" cy="10" r="10" fill="#ff4457" /><path d="M5 6l10-.5L11 15l-1-3-4 3 1-5z" fill="#8c1d2c" /></Svg></ToolButton>
        <ToolButton aria-label="Download-Helfer"><Svg s={18}><rect width="18" height="16" y="1" rx="3" fill="#e2979f" /><path d="M9 3v7M5.500 7.500L9 11l3.500-3.500M4 14h10" stroke="#fff" strokeWidth="2" /></Svg></ToolButton>
        <ToolButton aria-label="Bibliothek"><Svg s={20} h={18}><path d="M1.500 1v16M5.500 3v14M9.500 3v14M13 2.500L18.500 17" {...line} strokeWidth={2} /></Svg></ToolButton>
        <ToolButton aria-label="Konto"><Svg s={20}><clipPath id="face"><circle cx="10" cy="10" r="10" /></clipPath><g clipPath="url(#face)"><path d="M0 0h20v20H0z" fill="#b9c3b5" /><path d="M0 20c0-6 4-8 10-8s10 2 10 8z" fill="#c4152f" /><path d="M12 20l2-6 6 6z" fill="#2a2a2c" /><ellipse cx="10" cy="8.500" rx="4.200" ry="6" fill="#d79c80" /><path d="M5.500 7Q5 1.500 10 1.500T14.500 7Q13 4 10 4T5.500 7z" fill="#3c2a20" /></g></Svg></ToolButton>
        <Separator $h={42} $c="#d3d3d6" />
        <ToolButton aria-label="Menü"><Svg s={16}><path d="M1.500 2.500h13M1.500 8h13M1.500 14h13" {...line} /></Svg></ToolButton>
      </Extensions>
    </Toolbar>
  </>
);

const ink = "#3d4752";
const TopBar = () => (
  <Glass>
    <Sliver />
    <MenuButton aria-label="Hauptmenü"><Svg s={30}><g fill={ink}><path d="M8 2l7 7-7 7-7-7z" /><rect x="17" y="4" width="11" height="11" rx="1" /><rect x="4" y="17" width="11" height="11" rx="1" /><rect x="17" y="17" width="11" height="11" rx="1" /></g></Svg></MenuButton>
    <BarGap />
    <TaskButton aria-label="Speicher-Manager"><StorageArt size={38} /></TaskButton>
    <Tray>
      <Separator $h={34} $c="#747884" />
      <TrayButton aria-label="Benachrichtigungen"><Svg s={32} h={30}><ellipse cx="16" cy="13" rx="14" ry="12" fill={ink} /><path d="M8 20v9l9-6z" fill={ink} /><circle cx="9.500" cy="13" r="1.800" fill="#b9bdc9" /><circle cx="16" cy="13" r="1.800" fill="#b9bdc9" /><circle cx="22.500" cy="13" r="1.800" fill="#b9bdc9" /><circle cx="25" cy="23" r="7" fill="#fb4b4b" /></Svg></TrayButton>
      <TrayButton aria-label="Optionen"><Svg s={28}><path d="M14 0c5 0 7 3 7 8 0 4-2 7-4 9v3c4 2 11 2 11 8H0c0-6 7-6 11-8v-3c-2-2-4-5-4-9 0-5 2-8 7-8z" fill={ink} /></Svg></TrayButton>
      <TrayButton aria-label="Suchen"><Svg s={28}><circle cx="17.500" cy="11" r="9" stroke={ink} strokeWidth="3.600" /><path d="M11 17.500L3 25" stroke={ink} strokeWidth="5" strokeLinecap="round" /></Svg></TrayButton>
      <TrayButton aria-label="Widgets"><Svg s={30} h={26}><path d="M2 3.500h26v21H2z" stroke="#0086e5" strokeWidth="3" /><path d="M1 1.500h28" stroke="#0086e5" strokeWidth="3" /><circle cx="9" cy="12" r="3.600" fill="#0086e5" /><path d="M15 9.500h10M15 14h10M5 19h20" stroke="#0086e5" strokeWidth="2" /></Svg></TrayButton>
      <TrayButton aria-label="Fensterübersicht"><Svg s={30} h={28}><g stroke={ink} strokeWidth="2.400"><path d="M1.500 4h11v20h-11zM18.500 2h10v8.500h-10zM18.500 17h10v9h-10z" /><path d="M1 5h12M18 3h11M18 18h11" strokeWidth="3" /></g></Svg></TrayButton>
    </Tray>
  </Glass>
);

const StorageWindow = () => (
  <AppWindow>
    <TitleBar>
      <TitleIcon><StorageArt size={29} /></TitleIcon>
      <WindowTitle>Speicher-Manager</WindowTitle>
      <WindowButtons>
        <WindowButton aria-label="Hilfe"><Svg s={15}><path d="M1 2.500h11.500V7H7v3.500M7 12v2.500" stroke="#98a1aa" strokeWidth="2.200" /></Svg></WindowButton>
        <WindowButton aria-label="Minimieren"><Svg s={16}><path d="M0 8h16" stroke="#98a1aa" strokeWidth="3" /></Svg></WindowButton>
        <WindowButton aria-label="Maximieren"><Svg s={16} h={14}><path d="M1.500 1h13v12h-13z" stroke="#98a1aa" strokeWidth="2" /><path d="M1 3h14" stroke="#98a1aa" strokeWidth="5" /></Svg></WindowButton>
        <WindowButton aria-label="Schließen"><Svg s={15}><path d="M1.500 1.500l12 12M13.500 1.500l-12 12" stroke="#98a1aa" strokeWidth="2.400" /></Svg></WindowButton>
      </WindowButtons>
    </TitleBar>
    <WindowBody>
      <Sidebar>
        {sections.map(([kind, label]) => (
          <NavItem key={kind} href={`#${kind}`} $active={kind === "hdd"}>
            <SideIcon kind={kind} on={kind === "hdd"} />
            {label}
          </NavItem>
        ))}
      </Sidebar>
      <Pane>
        <Tabs role="tablist">
          <Tab role="tab" aria-selected $active>HDD/SSD</Tab>
          <Tab role="tab">Protokolle</Tab>
          <Tab role="tab">Test Planer</Tab>
          <Tab role="tab">Einstellungen</Tab>
        </Tabs>
        <Actions>
          <Action>Integritätsstatus</Action>
          <Action>Aktion <Caret /></Action>
          <Spacer />
          <Action $w={37} aria-label="Filter"><Svg s={20}><path d="M2 2h16L12 10v8l-4-2.500V10z" stroke={ink} strokeWidth="2.400" strokeLinejoin="round" /><path d="M8 10h4v8l-4-2.500z" fill={ink} /></Svg></Action>
          <Segmented>
            <Action $w={47} $on $side="left" aria-label="Detailansicht" aria-pressed><Svg s={20} h={16}><path d="M0 1h7v6H0zM0 9h7v6H0zM9 3h11v3H9zM9 11h11v3H9z" fill="#fff" /></Svg></Action>
            <Action $w={48} $side="right" aria-label="Listenansicht" aria-pressed={false}><Svg s={18} h={14}><path d="M0 1.500h18M0 7h18M0 12.500h18" stroke={ink} strokeWidth="2.600" /></Svg></Action>
          </Segmented>
        </Actions>
        <DriveList>
          {drives.map(([name, model], i) => (
            <Drive key={name} $active={i === 0}>
              <DriveArt w={36} h={40} fg={grey} bg={i === 0 ? "#e6f4ff" : "#fff"} />
              <DriveText>
                <h3><DriveName>{name}</DriveName><DriveState> - <Ok>Normal</Ok></DriveState></h3>
                <p>{model}</p>
              </DriveText>
              <Expand aria-label={`${name} aufklappen`}><Chevron c="#1f93ea" w={2.6} /></Expand>
            </Drive>
          ))}
        </DriveList>
      </Pane>
    </WindowBody>
  </AppWindow>
);

const Bond = ({ label }: { label: string }) => (
  <PickerWrap>
    <Picker aria-label={label}><option>Bond 1</option></Picker>
    <Caret />
  </PickerWrap>
);

const Scroll = ({ inset, strong }: { inset?: boolean; strong?: boolean }) => (
  <Scroller $inset={inset}>
    <ScrollButton aria-label="Nach oben"><Chevron up /></ScrollButton>
    <ScrollButton aria-label="Nach unten"><Chevron c={strong ? "#98a0a8" : undefined} /></ScrollButton>
  </Scroller>
);

const usage = 72;
const circumference = 2 * Math.PI * 34;

const WidgetPanel = () => (
  <Widgets>
    <WidgetBar>
      <WidgetButton aria-label="Widget hinzufügen"><Svg s={16}><path d="M8 0v16M0 8h16" stroke="#4b5660" strokeWidth="2.400" /></Svg></WidgetButton>
      <Spacer />
      <WidgetButton aria-label="Ausblenden"><Svg s={16}><path d="M0 8h16" stroke="#848b97" strokeWidth="2" /></Svg></WidgetButton>
      <WidgetButton aria-label="Anheften"><Svg s={18}><path d="M11 0l7 7-3 1-3 3v4l-2 1-4-4-6 6 5-8-3-3 2-2h4l3-3z" fill="#848b97" /></Svg></WidgetButton>
      <WidgetButton aria-label="Andocken"><Svg s={18}><path d="M0 2h13v6H0zM5 10h8v5H5zM15 0h3v18h-3z" fill="#0b70c4" /></Svg></WidgetButton>
    </WidgetBar>
    <CardStack>
      <Card>
        <CardTitle>
          <Svg s={28}><path d="M14 0c4 3 8 4 12 4 1 12-1 20-12 24C3 24 1 16 2 4c4 0 8-1 12-4z" fill="#0086e5" /><circle cx="16" cy="7.500" r="2.200" fill="#fff" /><path d="M11 12h4.500L13 20.500h3" stroke="#fff" strokeWidth="2.600" /></Svg>
          Systemzustand
        </CardTitle>
        <Health>
          <Svg s={80}><circle cx="40" cy="40" r="40" fill="#1fb100" /><path d="M19 40l14 15 29-30" stroke="#fff" strokeWidth="9" /></Svg>
          <div><HealthState>Gut</HealthState><HealthNote>Ihre DiskStation funktioniert ein…</HealthNote></div>
        </Health>
        <Facts>
          <Term>Servername</Term><dd>DS415plus</dd>
          <Term><Bond label="Netzwerkschnittstelle" /></Term><dd>192.168.1.2</dd>
          <Term>Laufzeit</Term><dd>00:34:14</dd>
        </Facts>
      </Card>
      <Card>
        <CardTitle>
          <Svg s={28} h={26}><rect width="28" height="26" rx="1" fill="#0086e5" /><rect x="3" y="3" width="22" height="20" stroke="#fff" strokeWidth="1.300" /><path d="M4 14h3l2-3 2 6 3-11 3 13 2-7 2 3h3" stroke="#fff" strokeWidth="1.700" /></Svg>
          Ressourcen-Monitor
        </CardTitle>
        <Meters>
          {[["CPU", 6], ["RAM", 15]].map(([name, value]) => (
            <React.Fragment key={name}>
              <MeterName>{name}</MeterName>
              <Track><Fill style={{ width: `${value}%` }} /></Track>
              <MeterValue>{value}%</MeterValue>
            </React.Fragment>
          ))}
          <MeterName><Bond label="Schnittstelle" /></MeterName>
          <Traffic>
            <Rate $c="#0b84e6"><Svg s={12} h={14}><path d="M6 0l6 7H9.500v7h-7V7H0z" fill="#0086e5" /></Svg>2 KB/s</Rate>
            <Rate $c="#1ea800"><Svg s={12} h={14}><path d="M6 14l6-7H9.500V0h-7v7H0z" fill="#1ea800" /></Svg>1 KB/s</Rate>
          </Traffic>
        </Meters>
      </Card>
      <Card>
        <CardTitle>
          <Svg s={28}><g strokeWidth="6"><path d="M20.500 5A11 11 0 1 1 4.500 19.500" stroke="#0086e5" /><path d="M3.500 17.500A11 11 0 0 1 9.500 4" stroke="#ffb000" /><path d="M11 3.500A11 11 0 0 1 18.500 4" stroke="#fb4b4b" /></g></Svg>
          Speicher
        </CardTitle>
        <Scrollable $pad="6px 6px 17px 26px">
          <Ring>
            <Svg s={80}><circle cx="40" cy="40" r="34" stroke="#ccd6e0" strokeWidth="12" /><circle cx="40" cy="40" r="34" stroke="#0c9bfb" strokeWidth="12" strokeDasharray={`${(circumference * usage) / 100} ${circumference}`} transform="rotate(-90 40 40)" /></Svg>
            <RingValue>{usage}<Percent>%</Percent></RingValue>
          </Ring>
          <VolumeText>
            <h3>Volume 1 (<Ok>Normal</Ok>)</h3>
            <p>Verwendete Kapazität: 14.99 T</p>
            <p>Verfügbare Kapazität: 5.96 TB</p>
          </VolumeText>
          <Scroll />
        </Scrollable>
      </Card>
      <Card>
        <CardTitle>
          <Svg s={28}><path d="M0 2h28v26H0z" fill="#fb4b4b" /><path d="M4 9h20v15H4z" fill="#fff" /><path d="M6.500 0v5M21.500 0v5" stroke="#fff" strokeWidth="4" /><path d="M6.500 0v4M21.500 0v4" stroke="#fb4b4b" strokeWidth="2" /><path d="M7.500 15.500l5 4.500 8.500-9" stroke={ink} strokeWidth="3" /></Svg>
          Geplante Aufgaben
        </CardTitle>
        <Scrollable $pad="0 6px 4px 17px">
          <TaskTable>
            <tbody>
              {tasks.map(([name, date, on]) => (
                <tr key={name}>
                  <td><Svg s={18}><path d="M0 2h4v2h10V2h4v16H0z" fill={on ? "#0086e5" : "#95a0aa"} /><path d="M5 0h8v2.500H5z" fill={on ? "#0086e5" : "#95a0aa"} /><path d="M5 10.500l3 3 5.500-5.500" stroke="#e6f1fb" strokeWidth="2.200" /></Svg></td>
                  <td>{name}</td>
                  <td>{date}</td>
                </tr>
              ))}
            </tbody>
          </TaskTable>
          <Scroll inset />
        </Scrollable>
      </Card>
      <Card>
        <CardTitle>
          <Svg s={28}><path d="M1 0h20l6 6v22H1z" fill="#1fb100" /><path d="M20 0l7 7h-7z" fill="#d9f2d4" /><path d="M5 11.500h3M5 16.500h3M5 21.500h3M10 11.500h12M10 16.500h12M10 21.500h12" stroke="#fff" strokeWidth="2" /></Svg>
          Letzte Protokolle
        </CardTitle>
        <Scrollable $pad="0 6px 4px 17px">
          <ul>
            {logs.map((text, i) => (
              <LogItem key={i}>
                <Svg s={18}><circle cx="9" cy="9" r="9" fill="#0086e5" /><circle cx="10.200" cy="4.500" r="1.500" fill="#fff" /><path d="M7 8h2.500L8 13.500h2.500" stroke="#fff" strokeWidth="2" /></Svg>
                {text}
              </LogItem>
            ))}
          </ul>
          <Scroll inset strong />
        </Scrollable>
      </Card>
    </CardStack>
  </Widgets>
);

const launchers: [string, React.ReactNode, boolean?][] = [
  ["Rechner", <Svg s={22} h={30}><path d="M0 0h22v30H0z" fill="#fff" /><path d="M2.500 2.500h17v5h-17z" fill="#262a2b" /><g fill="#262a2b">{[11, 17, 23].map((y) => [3, 9, 15].map((x) => <path key={`${x}${y}`} d={`M${x} ${y}h4v4z`} />))}</g></Svg>],
  ["Explorer", <Svg s={28} h={24}><path d="M0 1h12v5H0z" fill="#e8a317" /><path d="M0 4h28v18H0z" fill="#ffd96b" /><path d="M5 24v-9q0-2 2-2h14q2 0 2 2v9h-5v-5h-8v5z" fill="#3a9be8" /></Svg>],
  ["Firefox", <Svg s={30}><defs><linearGradient id="fx" x1="1" y1="0" x2="0" y2="1"><stop stopColor="#ffe226" /><stop offset=".5" stopColor="#ff7139" /><stop offset="1" stopColor="#e31587" /></linearGradient></defs><path d="M18 0c3 3 10 8 10 16a13 13 0 0 1-26 0C2 10 4 6 6 3l2 4h5c0-3 3-5 5-7z" fill="url(#fx)" /><circle cx="14.500" cy="16" r="6" fill="#7542e5" /><path d="M6 11q6-2 9 2-5 0-6 4z" fill="#ff9a2e" /></Svg>, true],
  ["Thunderbird", <Svg s={30}><path d="M6 4C14-2 30 2 29.500 16 29 24 24 29 19 30c4-5 5-12 1-17L6 12C2 12 0 9 0 8q4 0 6-4z" fill="#1f6fd0" /><path d="M6 4C12 0 20 0 24 5 16 2 10 6 8 12L2 9q3-1 4-5z" fill="#62b4f4" /><path d="M2 12l8-3 11 4v10l-9 5c-6-1-10-8-10-16z" fill="#f0f2f6" /><path d="M2 13l9 6 10-6" stroke="#a9b3c2" strokeWidth="1.500" /><path d="M1 14c0 8 5 14 12 15l6-3c-8 0-14-4-18-12z" fill="#1a57b0" /></Svg>],
  ["Lupe", <Svg s={30}><circle cx="15" cy="15" r="14.500" fill="#2489bd" /><circle cx="15" cy="13.500" r="8" stroke="#fff" strokeWidth="2.500" /><path d="M15 9.500v8M11 13.500h8M20 19l3 4" stroke="#fff" strokeWidth="2.500" /></Svg>],
  ["Earth Pro", <Svg s={30}><clipPath id="globe"><circle cx="15" cy="15" r="14" /></clipPath><g clipPath="url(#globe)"><path d="M0 0h30v30H0z" fill="#d3d5da" /><path d="M0 7c10-2 20 5 26 18M0 15c8-2 16 5 19 15M8 0c9 1 18 9 22 19" stroke="#7b808b" strokeWidth="2.500" /></g><path d="M6 21h18v8H6z" fill="#2c2e31" /><text x="15" y="28" fontSize="8" fontFamily="Open Sans, sans-serif" textAnchor="middle" fill="#fff">Pro</text></Svg>],
  ["Acrobat Reader", <Svg s={27}><path d="M0 0h27v27H0z" fill="#c4060b" /><path d="M5 22c6-3 10-11 9-16-3 0 0 11 8 12-5-2-11 0-17 4z" stroke="#fff" strokeWidth="1.600" /></Svg>],
  ["XnView", <Svg s={30} h={26}><g stroke="#f39a1d" strokeWidth="3" strokeLinecap="round"><path d="M3 8l3 2M10 3l1 3M19 2v3M26 8l-3 2" /><path d="M24 11C14 6 5 12 8 18s12 7 16 1" /></g><path d="M19 14c-6-3-8 5-2 5" stroke="#d8281c" strokeWidth="2.500" /></Svg>],
  ["TeamViewer", <Svg s={30}><rect width="30" height="30" rx="2" fill="#0f7ee6" /><circle cx="15" cy="15" r="12" fill="#fff" /><path d="M4 15l7-5v3.500h8V10l7 5-7 5v-3.500h-8V20z" fill="#0f6fd6" /></Svg>],
  ["Tool", <Svg s={28} h={30}><path d="M17 3q6-3 11-2v11q-5 2-11 1-2-5 0-10z" fill="#00b0ee" /><path d="M0 9q5-4 10-4 4 4 3 9-3 2-6 1-4-2-7-6z" fill="#f04e23" /><path d="M11 17q4-2 7 0 3 5 2 12-6 0-11-3-1-5 2-9z" fill="#9ccb3b" /></Svg>],
  ["Skype", <Svg s={30}><circle cx="15" cy="15" r="11.500" fill="#0a9ce8" /><circle cx="9" cy="9" r="8" fill="#0a9ce8" /><circle cx="21" cy="21" r="8" fill="#0a86d8" /><path d="M19.500 11c-2-3-8.500-2.500-8.500.7 0 4 8.500 2 8.500 6.300 0 3.500-7 4-9.500.8" stroke="#fff" strokeWidth="2.600" strokeLinecap="round" /></Svg>],
];

const WindowsBar = () => (
  <WinBar>
    <WinButton aria-label="Start"><Svg s={20}><path d="M0 3l9-1.300V9.500H0zM10 1.500L20 0v9.500H10zM0 10.500h9v7.800L0 17zM10 10.500h10V20l-10-1.500z" fill="#fff" /></Svg></WinButton>
    <WinButton aria-label="Suche"><Svg s={20}><circle cx="13" cy="7" r="6" stroke="#fff" strokeWidth="1.500" /><path d="M8.500 11.500L0 20" stroke="#fff" strokeWidth="1.500" /></Svg></WinButton>
    <WinButton aria-label="Taskansicht"><Svg s={20} h={20}><path d="M1 0v3.500h12V0M1 20v-3.500h12V20M1 6h12v8H1zM18 0v20" stroke="#fff" strokeWidth="1.400" /><path d="M16.500 7h3v3h-3z" fill="#fff" /></Svg></WinButton>
    <Launchers>
      {launchers.map(([name, art, on]) => (<WinButton key={name} aria-label={name} $on={on}>{art}</WinButton>))}
    </Launchers>
    <WinTray>
      <WinTrayButton $w={40} aria-label="Zeiger"><Svg s={12} h={18}><path d="M1 1v13l3-3 2.500 6 2-1L6 10.500h5z" fill="#262a2b" stroke="#fff" strokeWidth="1.300" /></Svg></WinTrayButton>
      <WinTrayButton aria-label="Netzwerkdienst"><Svg s={16}><circle cx="8" cy="8" r="7.500" fill="#1178dd" /><path d="M3 3q3-2 5 0L5 6z" fill="#8fd0ff" /><path d="M9 7q5-2 5 3l-4 4-1-3z" fill="#58d04a" /></Svg></WinTrayButton>
      <WinTrayButton aria-label="Grafik"><Svg s={20}><path d="M0 0h20v20H0z" fill="#3a3d3e" /><path d="M16 8L5 4 2 6v12h12l1-6-6-1" stroke="#76d800" strokeWidth="2.200" strokeDasharray="2 1" /></Svg></WinTrayButton>
      <WinTrayButton aria-label="Sicherheit"><Svg s={20}><path d="M9 0c3 2 6 2.500 9 2.500C18 11 16 16 9 19 2 16 0 11 0 2.500 3 2.500 6 2 9 0z" fill="#fff" /><path d="M9 0v19M0 9h18" stroke="#262a2b" strokeWidth="1.300" /><circle cx="14.500" cy="14.500" r="5.500" fill="#1f9a50" /><path d="M12 14.500l2 2 3.500-3.500" stroke="#fff" strokeWidth="1.400" /></Svg></WinTrayButton>
      <WinTrayButton aria-label="Netzwerk"><Svg s={20} h={17}><path d="M5 1.500h14.300v11H4M4 6.500v8M.700 1.500h4v4h-4zM12 13v3M8 16h8" stroke="#fff" strokeWidth="1.300" /></Svg></WinTrayButton>
      <WinTrayButton aria-label="Lautstärke"><Svg s={20} h={16}><path d="M1 5.500h3l4-4v13l-4-4H1z" stroke="#fff" strokeWidth="1.300" /><path d="M11 5.500q2 2.500 0 5" stroke="#fff" strokeWidth="1.300" /><path d="M14 3q4 5 0 10M17 1q5 7 0 14" stroke="#8d9091" strokeWidth="1.300" /></Svg></WinTrayButton>
      <Clock>19:10<br />21.04.2020</Clock>
      <WinTrayButton $w={50} aria-label="Info-Center"><Svg s={20}><path d="M.700 1.500h18.600v14h-6.500L10 18.500l-2.800-3H.700z" stroke="#fff" strokeWidth="1.300" /></Svg></WinTrayButton>
      <WinTrayButton $w={10} aria-label="Desktop anzeigen" />
      <PeekEdge />
    </WinTray>
  </WinBar>
);

export default function App() {
  return (
    <Screen>
      <GlobalStyle />
      <Gradients />
      <Browser />
      <TopBar />
      <Desktop>
        <IconGrid>
          {shortcuts.map(({ art, label, narrow }) => (
            <li key={art}>
              <Shortcut>
                {art === "storage" ? <StorageArt size={80} /> : <Svg s={80}>{Art[art]}</Svg>}
                <ShortcutLabel $narrow={narrow}>{label}</ShortcutLabel>
              </Shortcut>
            </li>
          ))}
        </IconGrid>
        <StorageWindow />
        <WidgetPanel />
      </Desktop>
      <WindowsBar />
    </Screen>
  );
}
